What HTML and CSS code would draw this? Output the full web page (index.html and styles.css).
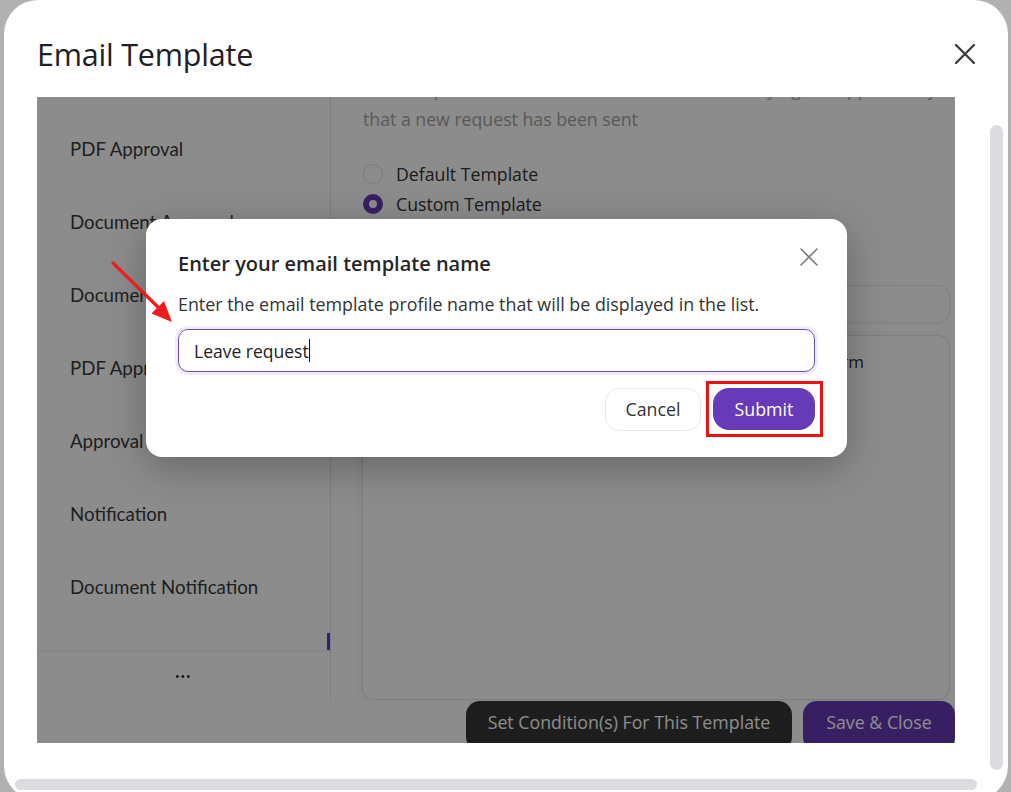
FILE: index.html
```html
<!DOCTYPE html>
<html lang="en">
<head>
<meta charset="utf-8">
<title>Email Template</title>
<link rel="stylesheet" href="styles.css">
</head>
<body>
<div class="dialog">
  <header class="dlg-head">
    <h1 class="dlg-title">Email Template</h1>
    <button class="dlg-close" aria-label="Close">
      <svg width="22" height="22" viewBox="0 0 22 22"><path d="M2 2L20 20M20 2L2 20" stroke="#3c3c3c" stroke-width="2.3" stroke-linecap="round"/></svg>
    </button>
  </header>

  <div class="stage">
    <div class="layout">
      <aside class="sidebar">
        <ul class="nav">
          <li class="nav-item">PDF Approval</li>
          <li class="nav-item">Document Approval</li>
          <li class="nav-item">Document Approval Request</li>
          <li class="nav-item">PDF Approval Request</li>
          <li class="nav-item">Approval Request</li>
          <li class="nav-item">Notification</li>
          <li class="nav-item">Document Notification</li>
          <li class="nav-item">PDF Notification</li>
        </ul>
        <div class="nav-thumb"></div>
        <div class="nav-more">•••</div>
      </aside>

      <section class="main">
        <p class="intro">This template will be used to send the email notifying the approver by email<br>that a new request has been sent</p>
        <div class="radios">
          <label class="radio"><span class="radio-dot"></span>Default Template</label>
          <label class="radio"><span class="radio-dot checked"></span>Custom Template</label>
        </div>
        <div class="field-box"></div>
        <div class="editor-box">
          <p class="editor-line">A new request has been submitted through the request form</p>
        </div>
        <div class="actions">
          <button class="btn btn-dark">Set Condition(s) For This Template</button>
          <button class="btn btn-purple">Save &amp; Close</button>
        </div>
      </section>
    </div>

    <div class="backdrop"></div>

    <div class="modal" role="dialog">
      <h2 class="modal-title">Enter your email template name</h2>
      <button class="modal-close" aria-label="Close">
        <svg width="18" height="18" viewBox="0 0 18 18"><path d="M1 1L17 17M17 1L1 17" stroke="#7a7a7a" stroke-width="1.6" stroke-linecap="round"/></svg>
      </button>
      <p class="modal-desc">Enter the email template profile name that will be displayed in the list.</p>
      <div class="text-input">Leave request<span class="caret"></span></div>
      <div class="modal-actions">
        <button class="btn-cancel">Cancel</button>
        <span class="highlight"><button class="btn-submit">Submit</button></span>
      </div>
    </div>

    <svg class="arrow" width="80" height="80" viewBox="0 0 80 80">
      <line x1="3" y1="4" x2="50" y2="50" stroke="#ee1c1c" stroke-width="3.2" stroke-linecap="round"/>
      <polygon points="62,63 41.5,54.5 54,42" fill="#ee1c1c"/>
    </svg>
  </div>

  <div class="vscroll"></div>
  <div class="hscroll"></div>
</div>
</body>
</html>
```

FILE: styles.css
```css
* { box-sizing: border-box; }

html, body {
  margin: 0;
  padding: 0;
  height: 100%;
  overflow: hidden;
}

body {
  background: #b1b1b1;
  font-family: "Open Sans", "Noto Sans", sans-serif;
  color: #333;
}

button {
  font-family: inherit;
  border: none;
  background: none;
  padding: 0;
  cursor: pointer;
}

.dialog {
  position: relative;
  margin-left: 4px;
  width: 1004px;
  height: 800px;
  background: #fff;
  border-radius: 34px;
  overflow: hidden;
}

.dlg-head {
  height: 97px;
  display: flex;
  align-items: center;
  justify-content: space-between;
  padding: 10px 32px 0 33px;
}

.dlg-title {
  margin: 0;
  font-family: "Open Sans", sans-serif;
  font-weight: 400;
  font-size: 30.5px;
  color: #202124;
  letter-spacing: -0.2px;
}

.dlg-close {
  width: 22px;
  height: 22px;
  display: flex;
}

.stage {
  position: relative;
  margin-left: 33px;
  width: 918px;
  height: 646px;
  overflow: hidden;
  background: #fff;
}

.layout {
  display: grid;
  grid-template-columns: 294px minmax(0, 1fr);
  height: 100%;
}

/* sidebar */
.sidebar {
  position: relative;
  height: 603px;
  border-right: 1px solid #e7e3f2;
  display: flex;
  flex-direction: column;
  font-family: "Lato", sans-serif;
}

.nav {
  list-style: none;
  margin: 0;
  padding: 15px 0 0 0;
  height: 553px;
  overflow: hidden;
  box-shadow: 0 2px 2px -1px rgba(0,0,0,0.06);
}

.nav-item {
  height: 73px;
  display: flex;
  align-items: center;
  padding-left: 33px;
  font-size: 18.7px;
  color: #3a3a3a;
  white-space: nowrap;
}

.nav-thumb {
  position: absolute;
  right: 0;
  top: 536px;
  width: 3px;
  height: 17px;
  background: #673ab7;
}

.nav-more {
  height: 50px;
  display: flex;
  align-items: center;
  justify-content: center;
  font-size: 7px;
  letter-spacing: 1.5px;
  color: #222;
  border-top: 1px solid #f0f0f0;
}

/* main panel */
.main {
  min-width: 0;
  display: flex;
  flex-direction: column;
  padding: 0 5px 0 32px;
}

.intro {
  margin: -23px 0 0 0;
  font-size: 17.7px;
  line-height: 30px;
  color: #a3a3a3;
  white-space: nowrap;
  overflow: hidden;
}

.radios {
  margin-top: 25px;
  display: flex;
  flex-direction: column;
}

.radio {
  height: 30px;
  display: flex;
  align-items: center;
  gap: 13px;
  font-size: 17.7px;
  color: #333;
}

.radio-dot {
  width: 20px;
  height: 20px;
  border-radius: 50%;
  border: 1px solid #dcdce6;
  background: #fff;
}

.radio-dot.checked {
  border: 6px solid #673ab7;
}

.field-box {
  margin: 66px 0 0 -1px;
  height: 38px;
  border: 1px solid #ececec;
  border-radius: 12px;
  background: #fff;
  box-shadow: 0 1px 3px rgba(0,0,0,0.05);
}

.editor-box {
  margin: 12px 0 0 -1px;
  height: 365px;
  border: 1px solid #e3e3e3;
  border-radius: 12px;
  background: #fff;
  box-shadow: -3px 0 6px rgba(0,0,0,0.05);
  padding: 14px 18px;
  overflow: hidden;
}

.editor-line {
  margin: 0;
  font-size: 17px;
  line-height: 24px;
  color: #333;
  white-space: nowrap;
}

.actions {
  margin: 1px -5px 0 0;
  display: flex;
  justify-content: flex-end;
  gap: 11px;
}

.btn {
  height: 50px;
  border-radius: 14px;
  font-size: 17.8px;
  color: #fff;
  padding: 0 18px 8px;
  white-space: nowrap;
}

.btn-dark {
  width: 326px;
  background: #363636;
}

.btn-purple {
  width: 152px;
  background: #673ab7;
}

/* overlay */
.backdrop {
  position: absolute;
  inset: 0;
  background: rgba(0, 0, 0, 0.45);
}

.modal {
  position: absolute;
  top: 122px;
  left: 109px;
  width: 701px;
  background: #fff;
  border-radius: 16px;
  padding: 28px 32px 20px 32px;
  box-shadow: 0 10px 40px rgba(0,0,0,0.28);
}

.modal-title {
  margin: 0;
  font-size: 20px;
  line-height: 34px;
  font-weight: 600;
  color: #262626;
}

.modal-close {
  position: absolute;
  top: 29px;
  right: 29px;
  width: 18px;
  height: 18px;
  display: flex;
}

.modal-desc {
  margin: 11px 0 0 0;
  font-size: 17.85px;
  line-height: 24px;
  color: #333;
}

.text-input {
  margin-top: 13px;
  height: 43px;
  border: 1px solid #6a4cc0;
  border-radius: 10px;
  box-shadow: 0 0 0 3px #f1ebfb;
  padding-left: 15px;
  display: flex;
  align-items: center;
  font-size: 17.5px;
  color: #222;
}

.caret {
  display: inline-block;
  width: 1.5px;
  height: 23px;
  background: #111;
}

.modal-actions {
  margin-top: 9px;
  display: flex;
  justify-content: flex-end;
  align-items: center;
  gap: 5px;
  margin-right: -8px;
}

.btn-cancel {
  width: 96px;
  height: 43px;
  border: 1px solid #e8e8f4;
  border-radius: 14px;
  background: #fff;
  font-size: 17.8px;
  color: #333;
}

.highlight {
  display: inline-flex;
  border: 3px solid #ee1111;
  padding: 4px 5px 4px 4px;
}

.btn-submit {
  width: 102px;
  height: 42px;
  border-radius: 16px;
  background: #673ab7;
  font-size: 17.8px;
  font-weight: 500;
  color: #fff;
}

.arrow {
  position: absolute;
  left: 73px;
  top: 162px;
}

/* scrollbars */
.vscroll {
  position: absolute;
  left: 986px;
  top: 125px;
  width: 13px;
  height: 645px;
  border-radius: 7px;
  background: #dadce0;
}

.hscroll {
  position: absolute;
  left: 11px;
  top: 779px;
  width: 962px;
  height: 11px;
  border-radius: 6px;
  background: #dadce0;
}
```
